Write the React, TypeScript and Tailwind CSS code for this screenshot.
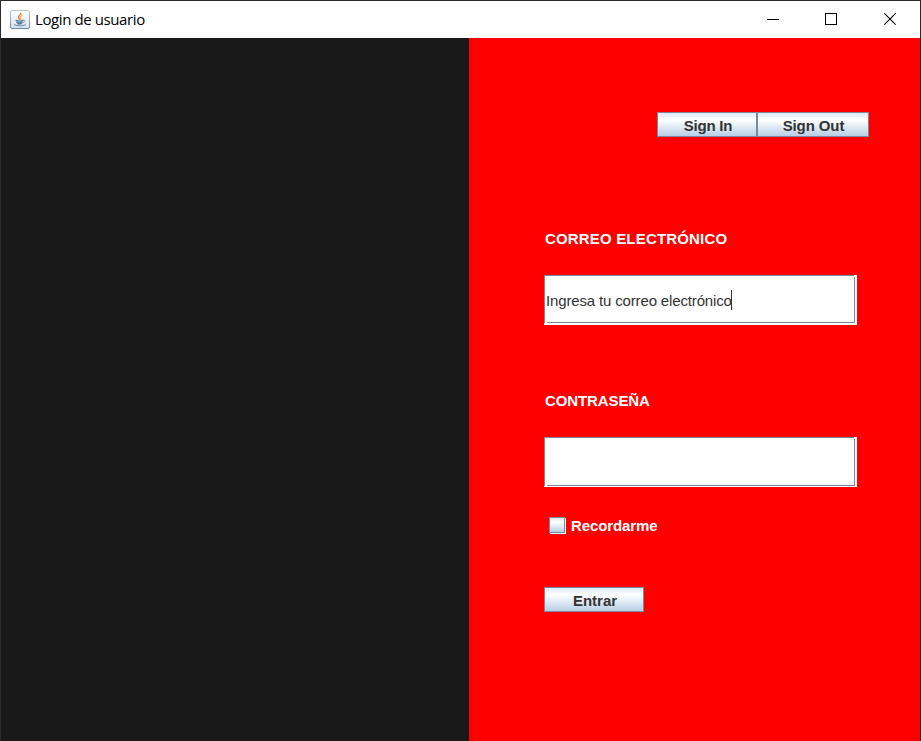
import React from "react";

function JavaIcon() {
  return (
    <svg width="20" height="19" viewBox="0 0 20 19" className="block">
      <defs>
        <linearGradient id="tile" x1="0" y1="0" x2="0" y2="1">
          <stop offset="0" stopColor="#ffffff" />
          <stop offset="0.5" stopColor="#edf1f5" />
          <stop offset="1" stopColor="#d3dde8" />
        </linearGradient>
        <linearGradient id="edge" x1="0" y1="0" x2="0" y2="1">
          <stop offset="0" stopColor="#bcc8d3" />
          <stop offset="1" stopColor="#6f8ba5" />
        </linearGradient>
      </defs>
      <rect x="0.5" y="0.5" width="19" height="18" rx="1.5" fill="url(#tile)" stroke="url(#edge)" />
      <g fill="none" strokeLinecap="round">
        <path d="M10.8 3.2c.7 1.8-3 2.4-2.3 4.3.3.8 1.1 1.1 1 2" stroke="#e98a35" strokeWidth="1.5" />
        <path d="M12 5.6c-1.6.7-2.2 1.5-1.3 2.6.4.5.2.9-.2 1.3" stroke="#f0a660" strokeWidth="1.1" />
        <path d="M6 10.4c1.8.7 5.2.7 7 0M6.7 12.1c1.5.7 4.2.7 5.6 0M7.5 13.6c1.2.4 3 .4 4 0" stroke="#557d9f" strokeWidth="1.2" />
        <path d="M13.5 10.2c2.3-.4 2 1.7-.3 2.3" stroke="#6e91ad" strokeWidth="0.9" />
        <path d="M4.8 14.7c2 1.4 8 1.4 10.3 0" stroke="#7192ad" strokeWidth="1.1" />
      </g>
    </svg>
  );
}

function TitleBar() {
  return (
    <header className="flex h-[37px] shrink-0 items-center bg-white pl-[9px]">
      <JavaIcon />
      <h1 className="-mt-[2px] ml-[5px] w-[150px] whitespace-nowrap font-['Open_Sans',sans-serif] text-[15px] leading-5 tracking-[-0.4px] text-black">
        Login de usuario
      </h1>
      <div className="ml-auto flex h-full">
        <button aria-label="Minimizar" className="flex w-[58px] items-center justify-center">
          <svg width="12" height="13" shapeRendering="crispEdges"><path d="M0 6.5h12" stroke="#000" /></svg>
        </button>
        <button aria-label="Maximizar" className="flex w-[58px] items-center justify-center">
          <svg width="12" height="13" shapeRendering="crispEdges"><path d="M.5.5h11v11H.5z" fill="none" stroke="#000" /></svg>
        </button>
        <button aria-label="Cerrar" className="flex w-[60px] items-center justify-center">
          <svg width="12" height="13"><path d="M.3.3l11.400 11.400M11.700.3L.3 11.700" stroke="#000" strokeWidth="1.1" /></svg>
        </button>
      </div>
    </header>
  );
}

function MetalButton({ label, className, textClass }: { label: string; className: string; textClass: string }) {
  return (
    <button
      className={
        "flex h-[25px] items-center justify-center border border-[#7a8a99] bg-linear-to-b from-[#dde8f3] via-white via-30% to-[#b8cfe5] text-[15px] leading-none font-bold whitespace-nowrap text-[#333] " +
        className
      }
    >
      <span className={"mt-px " + textClass}>{label}</span>
    </button>
  );
}

function Field({ type, text, label, rows }: { type: string; text?: string; label: string; rows: string }) {
  return (
    <div
      aria-label={label}
      data-type={type}
      className={"grid h-[50px] w-[313px] grid-cols-[1px_2px_307px_1px_2px] bg-white " + rows}
    >
      <div className="col-span-4 col-start-1 row-start-1 mr-px bg-[#7a8a99]" />
      <div className="col-start-1 row-span-3 row-start-2 bg-[#7a8a99]" />
      <div className="col-span-2 col-start-3 row-start-4 bg-[#7a8a99]" />
      <div className="col-start-4 row-span-2 row-start-3 bg-[#7a8a99]" />
      <div className="col-span-2 col-start-2 row-start-3 flex items-center pl-px">
        {text && (
          <>
            <span className="mt-[3px] w-[185px] text-[15px] leading-5 tracking-[-0.15px] whitespace-nowrap text-[#333]">{text}</span>
            <span className="mt-px h-5 w-px bg-[#333]" />
          </>
        )}
      </div>
    </div>
  );
}

export default function App() {
  return (
    <div className="flex h-[741px] w-[921px] flex-col overflow-hidden border-t border-r border-l border-[#2b2b2b] bg-[#191919] font-['Liberation_Sans',Arial,sans-serif]">
      <TitleBar />
      <main className="flex flex-1">
        <section className="w-[468px] bg-[#191919]" />
        <section className="flex-1 bg-[#ff0000] pt-[74px] pl-[75px]">
          <nav className="ml-[113px] flex">
            <MetalButton label="Sign In" className="w-[100px]" textClass="ml-[2px] tracking-[-0.2px]" />
            <MetalButton label="Sign Out" className="w-[112px]" textClass="ml-px tracking-[-0.1px]" />
          </nav>
          <form>
            <label className="mt-[92px] ml-px block h-5 text-[15px] leading-5 font-bold tracking-[0.17px] whitespace-nowrap text-white">CORREO ELECTRÓNICO</label>
            <div className="mt-[26px]"><Field label="Correo electrónico" type="email" text="Ingresa tu correo electrónico" rows="grid-rows-[1px_1px_45px_1px_2px]" /></div>
            <label className="mt-[66px] ml-px block h-5 text-[15px] leading-5 font-bold tracking-[-0.1px] whitespace-nowrap text-white">CONTRASEÑA</label>
            <div className="mt-[26px]"><Field label="Contraseña" type="password" rows="grid-rows-[1px_1px_46px_1px_1px]" /></div>
            <label className="mt-[28px] ml-[5px] flex h-5 items-center">
              <span className="mr-px mb-px size-4 border border-[#7a8a99] bg-linear-to-b from-[#dde8f3] via-white via-30% to-[#b8cfe5] shadow-[1px_1px_0_#ffffff]" />
              <span className="mt-px ml-[5px] text-[15px] leading-5 font-bold tracking-[-0.1px] text-white">Recordarme</span>
            </label>
            <MetalButton label="Entrar" className="mt-[52px] w-[100px]" textClass="ml-[2px]" />
          </form>
        </section>
      </main>
    </div>
  );
}
